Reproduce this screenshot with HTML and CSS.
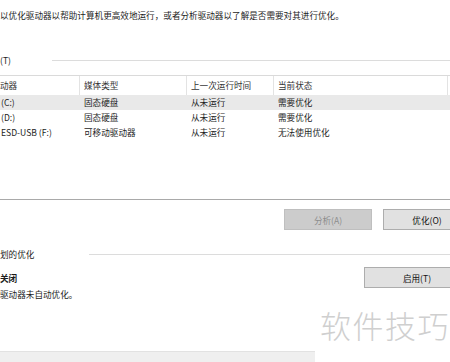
FILE: index.html
```html
<!DOCTYPE html>
<html lang="zh-CN">
<head>
  <meta charset="UTF-8" />
  <meta name="viewport" content="width=device-width, initial-scale=1.0"/>
  <title>优化驱动器</title>
  <link rel="stylesheet" href="styles.css">
</head>
<body>

<p class="intro">以优化驱动器以帮助计算机更高效地运行，或者分析驱动器以了解是否需要对其进行优化。</p>

<!-- 状态 -->
<div class="group-head status-head">
  <span class="group-label">(T)</span>
  <span class="group-line"></span>
</div>

<div class="drive-list">
  <div class="list-row list-header">
    <div class="cell first">动器</div>
    <div class="cell">媒体类型</div>
    <div class="cell">上一次运行时间</div>
    <div class="cell">当前状态</div>
    <div class="cell tail"></div>
  </div>
  <div class="list-row selected">
    <div class="cell first">(C:)</div>
    <div class="cell">固态硬盘</div>
    <div class="cell">从未运行</div>
    <div class="cell">需要优化</div>
    <div class="cell tail"></div>
  </div>
  <div class="list-row">
    <div class="cell first">(D:)</div>
    <div class="cell">固态硬盘</div>
    <div class="cell">从未运行</div>
    <div class="cell">需要优化</div>
    <div class="cell tail"></div>
  </div>
  <div class="list-row">
    <div class="cell first">ESD-USB (F:)</div>
    <div class="cell">可移动驱动器</div>
    <div class="cell">从未运行</div>
    <div class="cell">无法使用优化</div>
    <div class="cell tail"></div>
  </div>
</div>

<div class="actions">
  <button class="btn" disabled>分析(A)</button>
  <button class="btn">优化(O)</button>
</div>

<!-- 已计划的优化 -->
<div class="group-head plan-head">
  <span class="group-label">划的优化</span>
  <span class="group-line"></span>
</div>

<div class="plan-row">
  <div class="plan-text">
    <div class="plan-state">关闭</div>
    <div class="plan-note">驱动器未自动优化。</div>
  </div>
  <button class="btn btn-wide">启用(T)</button>
</div>

<div class="bottom-bar"></div>

<div class="watermark">软件技巧</div>

</body>
</html>
```

FILE: styles.css
```css
body {
  margin: 0; width: 450px; height: 362px; overflow: hidden; position: relative;
  background: #fff; color: #1c1c1c;
  font-family: "Noto Sans CJK SC", "Noto Sans", sans-serif; font-size: 8.6px;
}
.intro { margin: 0; padding-top: 9px; line-height: 12px; white-space: nowrap; }

.group-head { display: flex; align-items: center; height: 12px; line-height: 12px; }
.group-label { flex: none; }
.group-line { flex: 1; height: 1px; background: #dcdcdc; }
.status-head { margin-top: 33px; }
.status-head .group-label { width: 52px; }
.plan-head { margin-top: 18px; }
.plan-head .group-label { width: 89px; }

.drive-list {
  margin-top: 9px; height: 123px;
  border-top: 1px solid #dadada; border-bottom: 1px solid #a9a9a9;
}
.list-row { display: grid; grid-template-columns: 79px 107px 87px 174px 3px; height: 15px; line-height: 15px; }
.list-row.selected { background: #e9e9e9; }
.list-header { height: 19px; line-height: 19px; color: #333; }
.cell { padding-left: 5px; white-space: nowrap; overflow: hidden; }
.cell.first { padding-left: 1px; }
.list-header .cell { border-left: 1px solid #e3e3e3; padding-left: 4px; }
.list-header .cell.first { border-left: none; padding-left: 0; }

.btn {
  box-sizing: border-box; height: 21px; padding: 0;
  font: inherit; color: #111; background: #e1e1e1; border: 1px solid #adadad;
}
.btn:disabled { background: #cccccc; border-color: #bfbfbf; color: #8d8d8d; }

.actions { display: flex; gap: 11px; margin-top: 9px; padding-left: 284px; }
.actions .btn { flex: none; width: 88px; }

.plan-row { display: flex; justify-content: space-between; margin-top: 7px; }
.plan-text { padding-top: 3px; line-height: 16px; }
.plan-state { font-weight: bold; }
.btn-wide { width: 106px; flex: none; margin-right: -20px; }

.bottom-bar {
  margin-top: 49px; width: 315px; height: 12px;
  background: #efefef; border-top: 1px solid #e2e2e2;
}

.watermark {
  position: absolute; left: 320px; top: 306px;
  font-size: 31px; line-height: 38px; font-weight: 300; letter-spacing: 1.5px;
  color: #cfcfcf; white-space: nowrap;
}
```
